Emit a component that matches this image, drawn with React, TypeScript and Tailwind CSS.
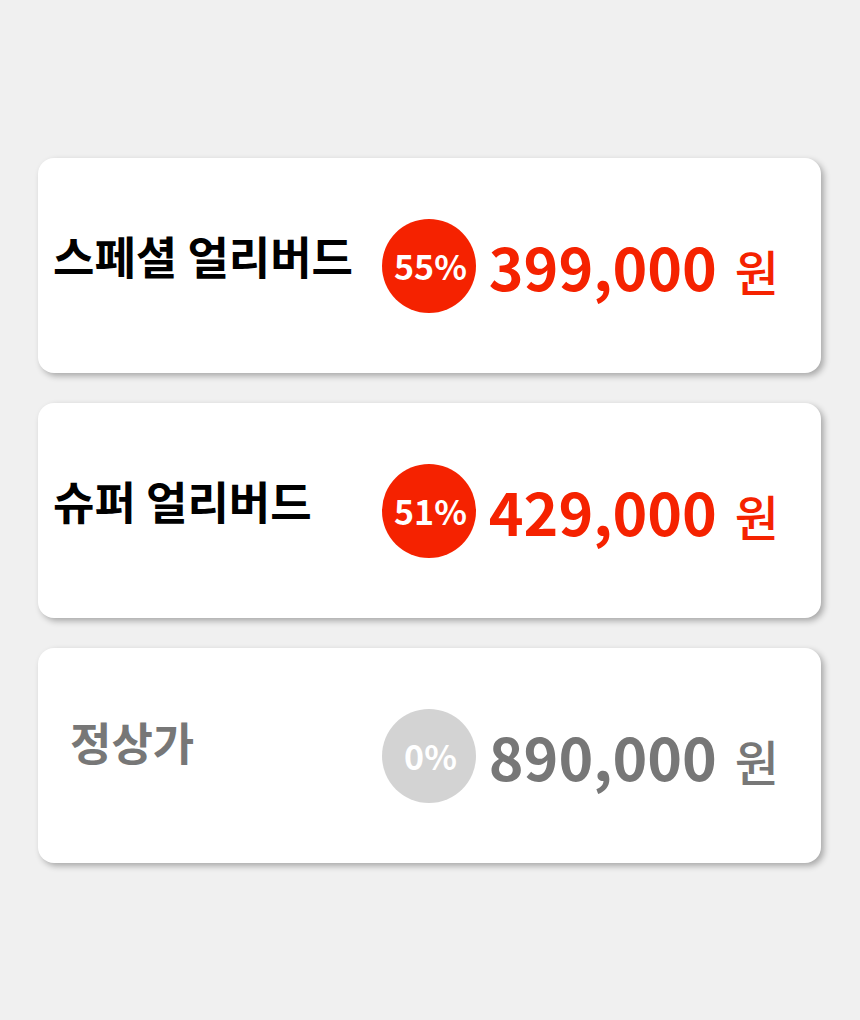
import React from "react";

type Row = {
  title: string;
  pct: string;
  price: string;
  muted?: boolean;
};

const rows: Row[] = [
  { title: "스페셜 얼리버드", pct: "55%", price: "399,000" },
  { title: "슈퍼 얼리버드", pct: "51%", price: "429,000" },
  { title: "정상가", pct: "0%", price: "890,000", muted: true },
];

function Card({ row }: { row: Row }) {
  const muted = row.muted;
  return (
    <div className="flex h-[215px] w-[783px] items-center rounded-[16px] bg-white shadow-[3px_3px_6px_rgba(0,0,0,0.3)]">
      <div
        className={
          muted
            ? "mb-[28px] pl-[32px] text-[45px] font-bold leading-none text-[#777777]"
            : "mb-[20px] pl-[15px] text-[45px] font-bold leading-none text-black"
        }
      >
        {row.title}
      </div>
      <div className="ml-auto mr-[42px] flex w-[397px] items-center">
        <div
          className={
            muted
              ? "flex h-[94px] w-[94px] shrink-0 items-center justify-center rounded-full bg-[#d3d3d3] text-[34px] font-bold text-white"
              : "flex h-[94px] w-[94px] shrink-0 items-center justify-center rounded-full bg-[#f52200] text-[34px] font-bold text-white"
          }
        >
          <span className="pl-[3px] leading-none">{row.pct}</span>
        </div>
        <div
          className={
            muted
              ? "flex flex-1 items-baseline justify-end text-[#777777]"
              : "flex flex-1 items-baseline justify-end text-[#f52200]"
          }
        >
          <span className="text-[59px] font-bold leading-none">{row.price}</span>
          <span className="ml-[18px] text-[48px] font-medium leading-none">원</span>
        </div>
      </div>
    </div>
  );
}

export default function App() {
  return (
    <div
      className="min-h-[1020px] w-[860px] bg-[#f0f0f0] pl-[38px] pt-[158px]"
      style={{ fontFamily: '"Noto Sans CJK KR", "Noto Sans", sans-serif' }}
    >
      <div className="flex flex-col gap-[30px]">
        {rows.map((r) => (
          <Card key={r.title} row={r} />
        ))}
      </div>
    </div>
  );
}
